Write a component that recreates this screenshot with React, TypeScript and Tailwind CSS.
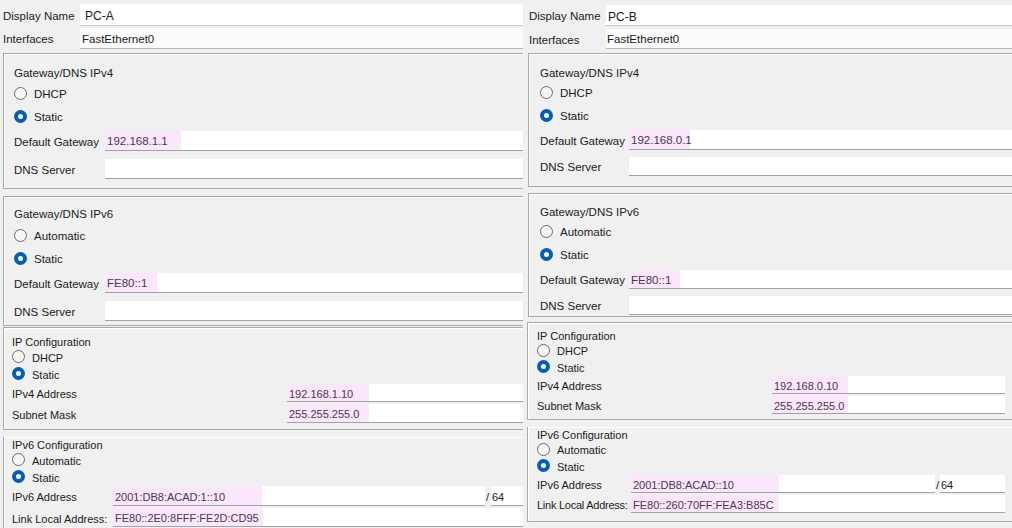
import clsx from 'clsx'

// Two Packet Tracer "Config" screenshots (PC-A / PC-B) side by side.

// nudges glyphs ~1.5px down inside centred rows, like the Windows text baseline
const T = 'pt-[3px]'

function Radio({ checked }: { checked?: boolean }) {
  if (checked) {
    return (
      <span className="flex h-[13px] w-[13px] shrink-0 items-center justify-center rounded-full bg-[#005fb8]">
        <span className="h-[5px] w-[5px] rounded-full bg-white" />
      </span>
    )
  }
  return <span className="h-[13px] w-[13px] shrink-0 rounded-full border border-[#6b6b6b] bg-[#f6f6f6]" />
}

function RadioRow({ label, checked, className }: { label: string; checked?: boolean; className: string }) {
  return (
    <div className={clsx('flex items-center gap-[7px]', className)}>
      <Radio checked={checked} />
      <span className={T}>{label}</span>
    </div>
  )
}

// white text box, optional pink "edited" highlight at the start
function Box({ value, hl, className }: { value?: string; hl?: string; className?: string }) {
  return (
    <div className={clsx('flex h-full items-stretch border-b border-[#a2a2a2] bg-white', className)}>
      {value && (
        <span className={clsx('flex items-center bg-[#fce6fb] pl-[2px] text-[#47394f]', T, hl)}>{value}</span>
      )}
    </div>
  )
}

function Group({ className, children }: { className: string; children: React.ReactNode }) {
  return (
    <div className={clsx('border border-[#a9a9a9] shadow-[inset_1px_1px_0_#ffffff]', className)}>{children}</div>
  )
}

function Title({ className, children }: { className: string; children: React.ReactNode }) {
  return <div className={clsx('flex items-center', T, className)}>{children}</div>
}

function PcA() {
  return (
    <div className="w-[523px] shrink-0 overflow-hidden">
      <div className="w-[560px] text-[11.5px] text-[#1b1b1b]">
        <div className="mt-[4px] flex h-[22px] items-center">
          <span className={clsx('w-[80px] pl-[3px]', T)}>Display Name</span>
          <div className={clsx('flex h-full flex-1 items-center border-b border-[#c9c9c9] bg-white pl-[5px] text-[12px]', T)}>
            PC-A
          </div>
        </div>
        <div className="mt-[2px] flex h-[21px] items-center">
          <span className={clsx('w-[80px] pl-[3px]', T)}>Interfaces</span>
          <div className={clsx('flex h-full flex-1 items-center border-b border-[#b4b4b4] bg-[#fbfbfb] pl-[2px]', T)}>
            FastEthernet0
          </div>
        </div>

        <Group className="ml-[3px] mt-[4px] pb-[9px] pl-[10px]">
          <Title className="mt-[10px] h-[16px]">Gateway/DNS IPv4</Title>
          <RadioRow label="DHCP" className="mt-[2px] h-[23px]" />
          <RadioRow label="Static" checked className="h-[23px]" />
          <div className="mt-[3px] flex h-[20px] items-center">
            <span className={clsx('w-[91px]', T)}>Default Gateway</span>
            <Box value="192.168.1.1" hl="w-[76px]" className="flex-1" />
          </div>
          <div className="mt-[8px] flex h-[20px] items-center">
            <span className={clsx('w-[91px]', T)}>DNS Server</span>
            <Box className="flex-1" />
          </div>
        </Group>

        <Group className="ml-[3px] mt-[7px] pb-[4px] pl-[10px]">
          <Title className="mt-[8px] h-[16px]">Gateway/DNS IPv6</Title>
          <RadioRow label="Automatic" className="mt-[3px] h-[23px]" />
          <RadioRow label="Static" checked className="h-[23px]" />
          <div className="mt-[3px] flex h-[20px] items-center">
            <span className={clsx('w-[91px]', T)}>Default Gateway</span>
            <Box value="FE80::1" hl="w-[52px]" className="flex-1" />
          </div>
          <div className="mt-[8px] flex h-[20px] items-center">
            <span className={clsx('w-[91px]', T)}>DNS Server</span>
            <Box className="flex-1" />
          </div>
        </Group>

        <div className="text-[11px]">
          <Group className="ml-[3px] mt-[1px] pb-[6px] pl-[8px]">
            <Title className="mt-[6px] h-[14px]">IP Configuration</Title>
            <RadioRow label="DHCP" className="h-[17px]" />
            <RadioRow label="Static" checked className="h-[17px]" />
            <div className="mt-[2px] flex h-[18px] items-center">
              <span className={clsx('w-[275px]', T)}>IPv4 Address</span>
              <Box value="192.168.1.10" hl="w-[82px]" className="flex-1" />
            </div>
            <div className="mt-[2px] flex h-[19px] items-center">
              <span className={clsx('w-[275px]', T)}>Subnet Mask</span>
              <Box value="255.255.255.0" hl="w-[82px]" className="flex-1" />
            </div>
          </Group>
          <Group className="ml-[3px] border-t-0 pb-[6px] pl-[8px]">
            <Title className="mt-[7px] h-[14px]">IPv6 Configuration</Title>
            <RadioRow label="Automatic" className="h-[17px]" />
            <RadioRow label="Static" checked className="h-[17px]" />
            <div className="mt-[1px] flex h-[20px] items-center">
              <span className={clsx('w-[101px]', T)}>IPv6 Address</span>
              <Box value="2001:DB8:ACAD:1::10" hl="w-[149px]" className="w-[372px]" />
              <span className={clsx('w-[6px] pl-[1px]', T)}>/</span>
              <div className={clsx('flex h-full flex-1 items-center border-b border-[#a2a2a2] bg-white pl-[1px]', T)}>64</div>
            </div>
            <div className="mt-[2px] flex h-[19px] items-center">
              <span className={clsx('w-[101px] whitespace-nowrap', T)}>Link Local Address:</span>
              <Box value="FE80::2E0:8FFF:FE2D:CD95" hl="w-[150px]" className="flex-1" />
            </div>
          </Group>
        </div>
      </div>
    </div>
  )
}

function PcB() {
  return (
    <div className="ml-[2px] w-[487px] shrink-0 overflow-hidden">
      <div className="w-[520px] text-[11.5px] text-[#1b1b1b]">
        <div className="mt-[5px] flex h-[21px] items-center">
          <span className={clsx('w-[81px] pl-[4px]', T)}>Display Name</span>
          <div className={clsx('flex h-full flex-1 items-center border-b border-[#c9c9c9] bg-white pl-[2px] text-[12px]', T)}>
            PC-B
          </div>
        </div>
        <div className="mt-[3px] flex h-[20px] items-center">
          <span className={clsx('w-[81px] pl-[4px]', T)}>Interfaces</span>
          <div className={clsx('flex h-full flex-1 items-center border-b border-[#b4b4b4] bg-[#fbfbfb] pl-[1px]', T)}>
            FastEthernet0
          </div>
        </div>

        <Group className="ml-[3px] mt-[4px] pb-[10px] pl-[11px]">
          <Title className="mt-[10px] h-[16px]">Gateway/DNS IPv4</Title>
          <RadioRow label="DHCP" className="mt-[1px] h-[23px]" />
          <RadioRow label="Static" checked className="h-[23px]" />
          <div className="mt-[3px] flex h-[20px] items-center">
            <span className={clsx('w-[89px]', T)}>Default Gateway</span>
            <Box value="192.168.0.1" hl="w-[61px]" className="flex-1" />
          </div>
          <div className="mt-[7px] flex h-[19px] items-center">
            <span className={clsx('w-[89px]', T)}>DNS Server</span>
            <Box className="flex-1" />
          </div>
        </Group>

        <Group className="ml-[3px] mt-[6px] pb-[1px] pl-[11px]">
          <Title className="mt-[9px] h-[16px]">Gateway/DNS IPv6</Title>
          <RadioRow label="Automatic" className="mt-[1px] h-[23px]" />
          <RadioRow label="Static" checked className="h-[23px]" />
          <div className="mt-[4px] flex h-[19px] items-center">
            <span className={clsx('w-[89px]', T)}>Default Gateway</span>
            <Box value="FE80::1" hl="w-[51px]" className="flex-1" />
          </div>
          <div className="mt-[7px] flex h-[19px] items-center">
            <span className={clsx('w-[89px]', T)}>DNS Server</span>
            <Box className="flex-1" />
          </div>
        </Group>

        <div className="text-[11px]">
          <Group className="ml-[2px] mt-[5px] w-[488px] pb-[5px] pl-[9px] pr-[9px]">
            <Title className="mt-[5px] h-[14px]">IP Configuration</Title>
            <RadioRow label="DHCP" className="h-[16px]" />
            <RadioRow label="Static" checked className="h-[17px]" />
            <div className="mt-[1px] flex h-[18px] items-center">
              <span className={clsx('w-[235px]', T)}>IPv4 Address</span>
              <Box value="192.168.0.10" hl="w-[76px]" className="flex-1" />
            </div>
            <div className="mt-[2px] flex h-[18px] items-center">
              <span className={clsx('w-[235px]', T)}>Subnet Mask</span>
              <Box value="255.255.255.0" hl="w-[76px]" className="flex-1" />
            </div>
          </Group>
          <Group className="ml-[2px] w-[488px] border-t-0 pb-[8px] pl-[9px] pr-[9px]">
            <Title className="mt-[7px] h-[14px]">IPv6 Configuration</Title>
            <RadioRow label="Automatic" className="h-[16px]" />
            <RadioRow label="Static" checked className="h-[17px]" />
            <div className="mt-[1px] flex h-[18px] items-center">
              <span className={clsx('w-[94px]', T)}>IPv6 Address</span>
              <Box value="2001:DB8:ACAD::10" hl="w-[148px]" className="w-[304px]" />
              <span className={clsx('w-[5px] pl-[1px]', T)}>/</span>
              <div className={clsx('flex h-full flex-1 items-center border-b border-[#a2a2a2] bg-white pl-[1px]', T)}>64</div>
            </div>
            <div className="mt-[2px] flex h-[18px] items-center">
              <span className={clsx('w-[94px] whitespace-nowrap tracking-[-0.25px]', T)}>Link Local Address:</span>
              <Box value="FE80::260:70FF:FEA3:B85C" hl="w-[148px]" className="flex-1" />
            </div>
          </Group>
        </div>
      </div>
    </div>
  )
}

export default function App() {
  return (
    <div className="flex h-[528px] w-[1012px] overflow-hidden bg-[#f0f0f0] font-['Liberation_Sans',Arial,sans-serif] leading-none">
      <PcA />
      <PcB />
    </div>
  )
}
